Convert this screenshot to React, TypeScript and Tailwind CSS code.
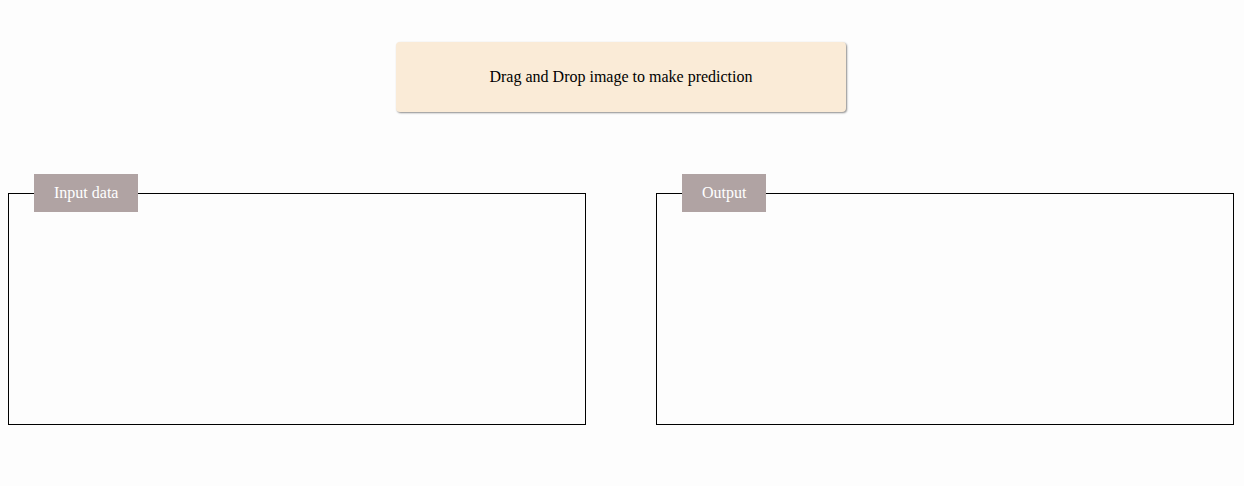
import React from "react";

function Panel({ label }: { label: string }) {
  return (
    <div className="relative w-[578px] h-[232px] border border-black">
      <div className="absolute left-[25px] top-[-20px] h-[38px] px-5 flex items-center bg-[#b0a3a3] text-white text-[16px] leading-[18px]">
        {label}
      </div>
    </div>
  );
}

export default function App() {
  return (
    <div
      className="w-[1244px] h-[486px] bg-[#fdfdfd] overflow-hidden"
      style={{ fontFamily: '"Liberation Serif", "Times New Roman", serif' }}
    >
      <div className="pt-[42px] flex justify-center pr-[2px]">
        <div className="w-[450px] h-[70px] rounded-[4px] bg-[#faebd7] shadow-[1px_1px_2px_rgba(0,0,0,0.45)] flex items-center justify-center text-[16px] text-black">
          Drag and Drop image to make prediction
        </div>
      </div>
      <div className="mt-[81px] pl-[8px] flex gap-[70px]">
        <Panel label="Input data" />
        <Panel label="Output" />
      </div>
    </div>
  );
}
